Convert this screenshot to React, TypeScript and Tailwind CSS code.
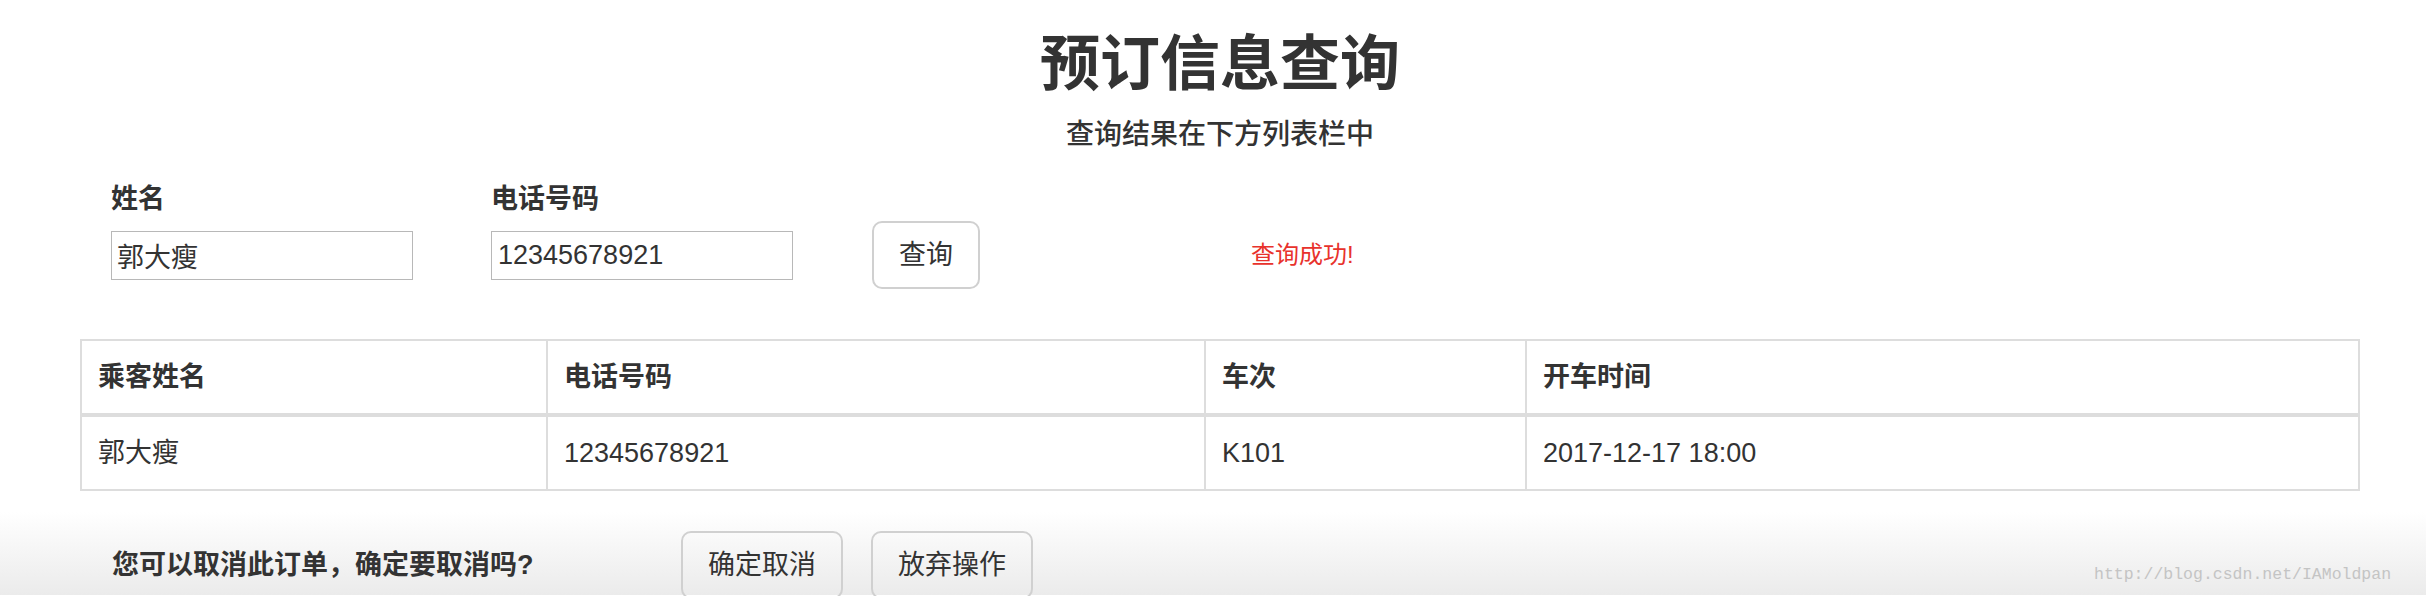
import React from "react";

const cols = [
  { w: "w-[464px]", head: "乘客姓名", body: "郭大瘦", first: true },
  { w: "w-[658px]", head: "电话号码", body: "12345678921" },
  { w: "w-[321px]", head: "车次", body: "K101" },
  { w: "w-[833px]", head: "开车时间", body: "2017-12-17 18:00" },
];

export default function App() {
  return (
    <div className="relative w-[2426px] h-[596px] overflow-hidden bg-white text-[#333] font-['Liberation_Sans','Noto_Sans_CJK_SC',sans-serif]">
      <h1 className="pt-[35px] pl-[14px] text-center text-[60px] leading-[60px] font-semibold">预订信息查询</h1>
      <p className="mt-[26px] pl-[14px] text-center text-[28px] leading-[28px] font-medium">查询结果在下方列表栏中</p>

      <div className="mt-[37px] pl-[111px]">
        <div className="flex text-[27px] leading-[27px] font-bold">
          <label className="w-[380px]">姓名</label>
          <label>电话号码</label>
        </div>
        <div className="mt-[8px] flex items-center h-[68px]">
          <input
            readOnly
            value="郭大瘦"
            className="w-[302px] h-[49px] border border-[#b8b8b8] px-[5px] text-[27px] text-[#333] outline-none"
          />
          <input
            readOnly
            value="12345678921"
            className="ml-[78px] w-[302px] h-[49px] border border-[#b8b8b8] px-[6px] text-[27px] text-[#333] outline-none"
          />
          <button className="ml-[79px] w-[108px] h-[68px] rounded-[10px] border-2 border-[#d0d0d0] bg-white text-[27px] text-[#333]">
            查询
          </button>
          <span className="ml-[271px] text-[24px] leading-[24px] text-[#e8322c]">查询成功!</span>
        </div>
      </div>

      <div className="mt-[50px] ml-[80px] w-[2280px] border-2 border-[#dddddd]">
        <div className="flex h-[72px] border-b-4 border-[#dddddd] box-content">
          {cols.map((c) => (
            <div
              key={c.head}
              className={`${c.w} flex items-center pl-[16px] text-[27px] font-bold ${c.first ? "" : "border-l-2 border-[#dddddd]"}`}
            >
              {c.head}
            </div>
          ))}
        </div>
        <div className="flex h-[72px]">
          {cols.map((c) => (
            <div
              key={c.head}
              className={`${c.w} flex items-center pl-[16px] text-[27px] ${c.first ? "" : "border-l-2 border-[#dddddd]"}`}
            >
              {c.body}
            </div>
          ))}
        </div>
      </div>

      <div className="h-[104px] pt-[40px] bg-linear-to-b from-white from-20% to-[#ebebeb]">
        <div className="flex items-center h-[68px] pl-[112px]">
          <span className="w-[569px] text-[27px] font-bold">您可以取消此订单，确定要取消吗?</span>
          <button className="w-[162px] h-[68px] rounded-[10px] border-2 border-[#d0d0d0] bg-transparent text-[27px] text-[#333]">
            确定取消
          </button>
          <button className="ml-[28px] w-[162px] h-[68px] rounded-[10px] border-2 border-[#d0d0d0] bg-transparent text-[27px] text-[#333]">
            放弃操作
          </button>
        </div>
      </div>

      <span className="absolute left-[2094px] top-[563px] text-[16.5px] leading-[24px] text-[#c4c4c4] font-['Liberation_Mono',monospace]">
        http://blog.csdn.net/IAMoldpan
      </span>
    </div>
  );
}
